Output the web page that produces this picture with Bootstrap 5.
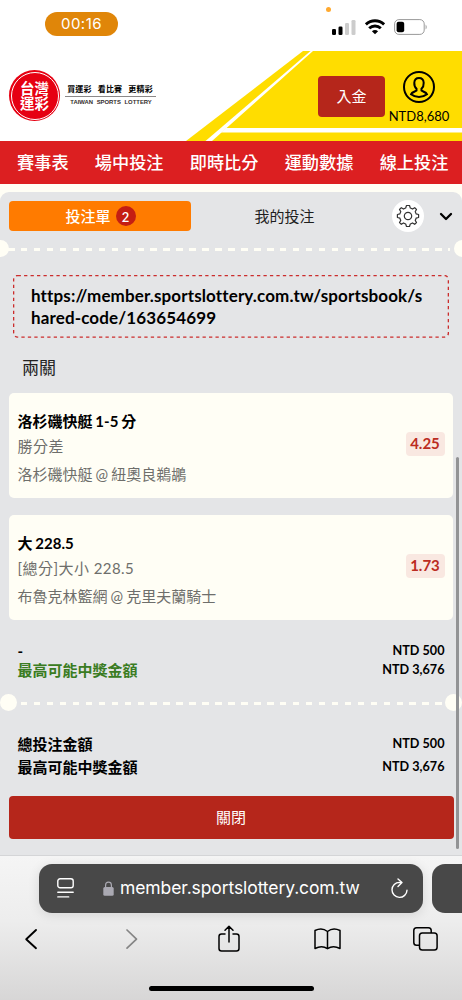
<!DOCTYPE html>
<html lang="zh-Hant">
<head>
<meta charset="utf-8">
<meta name="viewport" content="width=device-width, initial-scale=1">
<title>台灣運彩</title>
<link rel="stylesheet" href="https://cdn.jsdelivr.net/npm/bootstrap@5.3.0/dist/css/bootstrap.min.css">
<style>
  :root { --cream:#fffef5; --brick:#b5261b; --panel:#e4e5e7; }
  body { font-family: Lato, "Noto Sans CJK TC", sans-serif; color:#000; background:#fff; width:462px; height:1000px; overflow:hidden; line-height:1; }
  svg { display:block; flex:none; }
  .status { height:51px; padding:12px 34px 0 45px; }
  .clock { width:73px; height:24px; background:#e08609; color:#fff; font:400 15px/24px Inter, sans-serif; text-align:center; letter-spacing:.5px; }
  .mic { left:325.5px; top:7px; width:5px; height:5px; background:#ffa92f; }
  .signals { padding-top:7px; gap:9px; }
  .site-head { height:90px; }
  .seal { width:51px; height:51px; margin:19px 0 0 9px; background:#e60012; }
  .seal::after { content:""; position:absolute; inset:1.5px; border:1px solid #fff; border-radius:50%; }
  .seal span { font-size:14.5px; line-height:15px; height:15px; font-weight:700; color:#fff; text-align:center; }
  .motto { margin:32px 0 0 5px; width:92px; text-align:center; }
  .motto-zh { font-size:8px; font-weight:700; line-height:12.5px; height:13.5px; border-bottom:1px solid #8b8888; white-space:pre; width:91px; padding-right:1px; letter-spacing:.15px; }
  .motto-en { font:bold 5.9px/8px "Liberation Sans", sans-serif; color:#332d2d; margin-top:1.5px; white-space:nowrap; word-spacing:2px; }
  .deposit { margin:24.5px 0 0 161px; width:67px; height:41.5px; border-radius:4px; background:var(--brick); color:#fff; font-size:15px; padding:0; border:0; flex:none; }
  .account { margin:20px 0 0 2px; width:64px; font-size:13px; gap:7px; flex:none; }
  .mainnav { height:43px; background:#dc1f21; color:#fff; padding:1px 0 0 17px; gap:26.2px; font-size:17.2px; font-weight:500; white-space:nowrap; }
  .stage { background:var(--cream); padding-top:8px; height:671px; }
  .slip { background:var(--panel); border-radius:9px 9px 0 0; height:663px; padding:9px 9px 0; }
  .tabs-row { height:30px; font-size:15px; }
  .tab-on { width:182px; height:30px; background:#ff7b00; color:#fff; border-radius:4px; gap:5px; font-weight:500; margin-left:-.5px; padding-left:2px; }
  .count { width:20px; height:20px; background:#c41e13; font:600 13px/20px Lato, sans-serif; padding-top:1px; }
  .tab-off { width:188px; color:#1e1e1e; }
  .gear { width:32px; height:32px; background:#fff; margin-left:13.5px; }
  .perf { height:17px; margin:9px -9px 0; overflow:hidden; }
  .perf::before, .perf::after { content:""; position:absolute; top:0; width:17px; height:17px; border-radius:50%; background:var(--cream); }
  .perf::before { left:0; } .perf::after { right:0; }
  .perf.edge::before { left:-8.5px; } .perf.edge::after { right:-8.5px; }
  .perf i { display:block; height:2.5px; margin:8px 12px 0 7.5px; background:repeating-linear-gradient(90deg,var(--cream) 0 6.5px,transparent 6.5px 12.95px); }
  .share { margin:18px 4px 0; height:63px; padding:10px 0 0 18px; font-size:17px; font-weight:700; line-height:21.5px; letter-spacing:.13px; white-space:nowrap; font-variant-ligatures:none; }
  .share svg { top:0; left:0; }
  .fold { font-size:17px; line-height:20px; margin:20px 0 0 13px; color:#222; }
  .bet { height:105px; background:var(--cream); border-radius:5px; padding:17px 8.5px 0 8.5px; font-size:15px; white-space:nowrap; }
  .bet .pick { font-weight:700; line-height:22px; word-spacing:-.8px; }
  .bet .kind { line-height:28px; color:#6e6e6b; letter-spacing:.45px; }
  .bet .game { line-height:28px; color:#6e6e6b; word-spacing:-.8px; }
  .odds { width:39px; height:24px; border-radius:4px; background:#f9e8e1; color:#bc2c21; font-size:15px; font-weight:700; margin-top:21.5px; }
  .sum { padding:0 8.5px; font-size:15px; font-weight:700; }
  .sum .amt { font-size:12.65px; }
  .sum > div { height:19px; }
  .sum.loose > div { height:23px; }
  .green { color:#3a7c22; }
  .close-btn { width:445px; margin:17px 0 0 -.5px; height:43px; border-radius:4px; background:var(--brick); border:0; color:#fff; font-size:15px; padding:0; }
  .thumb { width:3.5px; left:455.5px; top:457px; height:392px; background:#929395; border-radius:2px; }
  .chrome { height:145px; background:linear-gradient(#f5f5f5,#ededed 45%,#d7d6d6); border-top:1px solid #d4d5d7; overflow:hidden; }
  .urlrow { padding:8px 0 0 39px; gap:9px; }
  .urlbar { width:384px; height:48.5px; border-radius:13px; background:#484848; color:#fff; flex:none; padding:0 14px 0 18px; box-shadow:0 2px 12px #0000001c; }
  .urlbar span { font:400 17.5px/48px Inter, sans-serif; margin-left:6px; width:270px; white-space:nowrap; letter-spacing:-.1px; }
  .nexttab { width:40px; height:48.5px; border-radius:13px 0 0 13px; background:#484848; flex:none; }
  .tools { height:53px; padding:0 24px; gap:76px; }
  .homebar { width:165px; height:5.5px; background:#000; margin:20px auto 0; }
</style>
<script src="https://cdn.jsdelivr.net/npm/bootstrap@5.3.0/dist/js/bootstrap.bundle.min.js"></script>
</head>
<body>
<header class="status d-flex justify-content-between position-relative">
  <div class="clock rounded-pill">00:16</div>
  <span class="mic position-absolute rounded-circle"></span>
  <div class="signals d-flex align-items-start">
    <svg width="24" height="16"><g fill="#000"><rect x="0" y="10" width="4" height="6" rx="1.3"/><rect x="6.5" y="7.5" width="4" height="8.5" rx="1.3"/></g><g fill="#ccc"><rect x="13" y="4" width="4" height="12" rx="1.3"/><rect x="19.5" y="1" width="4" height="15" rx="1.3"/></g></svg>
    <svg width="20" height="16" viewBox="0 0 20 16" fill="none" stroke="#000" stroke-width="2.9"><path d="M.9 5.4a13.2 13.2 0 0 1 18.2 0"/><path d="M4.2 9.3a8.4 8.4 0 0 1 11.6 0"/><path d="M6.9 12.3Q10 9.7 13.1 12.3L10 15.2Z" fill="#000" stroke="none"/></svg>
    <svg width="34" height="16" viewBox="0 0 34 16"><rect x=".6" y=".6" width="29.6" height="14.8" rx="4.3" fill="none" stroke="#999"/><rect x="2.6" y="2.8" width="7.6" height="10.4" rx="2" /><path d="M31.6 5.4q2.2 2.6 0 5.2z" fill="#999"/></svg>
  </div>
</header>

<section class="site-head d-flex position-relative">
  <svg class="position-absolute top-0 start-0" width="462" height="90">
    <path d="M303 0H462V90H186Z" fill="#fd0"/>
    <path d="M310.5 0H313L212 90H205.5Z" fill="#fff"/>
    <path d="M226 77H462V81.5H221Z" fill="#fff"/>
  </svg>
  <div class="seal rounded-circle position-relative d-flex flex-column justify-content-center flex-shrink-0"><span>台灣</span><span>運彩</span></div>
  <div class="motto"><div class="motto-zh">買運彩&#8195;看比賽&#8195;更精彩</div><div class="motto-en">TAIWAN SPORTS LOTTERY</div></div>
  <button class="deposit btn position-relative">入金</button>
  <div class="account d-flex flex-column align-items-center position-relative">
    <svg width="32" height="32" viewBox="0 0 32 32" fill="none" stroke="#000" stroke-width="2"><circle cx="16" cy="16" r="15"/><path d="M13.5 19.5V17.7C11.7 16 11.2 13.7 11.3 11.7 11.5 8.5 13.2 7 16 7s4.5 1.5 4.7 4.7c.1 2-.4 4.3-2.2 6v1.8c1 1 4.7 1.6 5.5 3.8C21.5 25.3 19 26 16 26s-5.5-.7-8-2.7c.8-2.2 4.5-2.8 5.5-3.8Z"/></svg>
    <span>NTD8,680</span>
  </div>
</section>

<nav class="mainnav d-flex align-items-center"><span>賽事表</span><span>場中投注</span><span>即時比分</span><span>運動數據</span><span>線上投注</span></nav>

<main class="stage">
  <div class="slip">
    <div class="tabs-row d-flex align-items-center">
      <div class="tab-on d-flex align-items-center justify-content-center">投注單<span class="count rounded-circle d-flex align-items-center justify-content-center">2</span></div>
      <div class="tab-off text-center">我的投注</div>
      <div class="gear rounded-circle d-flex align-items-center justify-content-center">
        <svg width="24" height="24" viewBox="-12 -12 24 24" fill="none" stroke="#333" stroke-width="1.2" stroke-linejoin="round"><circle r="3.7"/><path d="M-1.5-10.5H1.5L2.3-8Q3.6-7.5 4.5-6.9L6.7-8.3 8.5-6.6 7.2-4.3Q7.9-3.2 8.1-2.2L10.6-1.5V1.5L8.1 2.2Q7.9 3.2 7.2 4.3L8.5 6.6 6.7 8.3 4.5 6.9Q3.6 7.5 2.3 8L1.5 10.5H-1.5L-2.3 8Q-3.6 7.5-4.5 6.9L-6.7 8.3-8.5 6.6-7.2 4.3Q-7.9 3.2-8.1 2.2L-10.6 1.5V-1.5L-8.1-2.2Q-7.9-3.2-7.2-4.3L-8.5-6.6-6.7-8.3-4.5-6.9Q-3.6-7.5-2.3-8Z"/></svg>
      </div>
      <svg class="ms-auto" width="14" height="9" viewBox="0 0 14 9" fill="none" stroke="#000" stroke-width="2.3" stroke-linecap="round" stroke-linejoin="round"><path d="M2 2l5 5 5-5"/></svg>
    </div>
    <div class="perf edge position-relative"><i></i></div>

    <div class="share position-relative">
      <svg class="position-absolute" width="436" height="63" fill="none" stroke="#cb2d2d" stroke-dasharray="3.3 3.17"><rect x=".6" y=".6" width="434.8" height="61.5" rx="4" stroke-width="1.4"/></svg>
      https://member.sportslottery.com.tw/sportsbook/s<br>hared-code/163654699
    </div>
    <div class="fold">兩關</div>

    <div class="bet d-flex justify-content-between" style="margin-top:15px">
      <div><div class="pick">洛杉磯快艇 1-5 分</div><div class="kind">勝分差</div><div class="game">洛杉磯快艇 @ 紐奧良鵜鶘</div></div>
      <div class="odds d-flex align-items-center justify-content-center">4.25</div>
    </div>
    <div class="bet d-flex justify-content-between" style="margin-top:17px">
      <div><div class="pick">大 228.5</div><div class="kind">[總分]大小 228.5</div><div class="game">布魯克林籃網 @ 克里夫蘭騎士</div></div>
      <div class="odds d-flex align-items-center justify-content-center">1.73</div>
    </div>

    <div class="sum" style="margin-top:22px">
      <div class="d-flex justify-content-between align-items-center"><span>-</span><span class="amt">NTD 500</span></div>
      <div class="d-flex justify-content-between align-items-center"><span class="green">最高可能中獎金額</span><span class="amt">NTD 3,676</span></div>
    </div>
    <div class="perf position-relative" style="margin-top:14px"><i></i></div>
    <div class="sum loose" style="margin-top:22px">
      <div class="d-flex justify-content-between align-items-center"><span>總投注金額</span><span class="amt">NTD 500</span></div>
      <div class="d-flex justify-content-between align-items-center"><span>最高可能中獎金額</span><span class="amt">NTD 3,676</span></div>
    </div>
    <button class="close-btn btn">關閉</button>
  </div>
</main>
<span class="thumb position-absolute"></span>

<footer class="chrome">
  <div class="urlrow d-flex">
    <div class="urlbar d-flex align-items-center">
      <svg width="17" height="20" viewBox="0 0 17 20" fill="none" stroke="#fff" stroke-width="1.4" stroke-linecap="round"><rect x=".8" y=".8" width="15.4" height="9" rx="2.3"/><path d="M.8 14.2H16.2M.8 18.9H11.7"/></svg>
      <svg style="margin-left:29px" width="11" height="15" viewBox="0 0 11 15"><rect x=".3" y="6" width="10.4" height="8.7" rx="1.5" fill="#aaa9b2"/><path d="M2.6 6.5V4a2.9 2.9 0 0 1 5.8 0v2.5" fill="none" stroke="#aaa9b2" stroke-width="1.2"/></svg>
      <span class="flex-shrink-0">member.sportslottery.com.tw</span>
      <svg width="19" height="21" viewBox="0 0 19 21" fill="none" stroke="#fff" stroke-width="1.4" stroke-linecap="round" stroke-linejoin="round"><path d="M9.5 4.4A7.5 7.5 0 1 0 17 12.2M8 1l4 3.6-4 3.8M11.5 4.6H9"/></svg>
    </div>
    <div class="nexttab"></div>
  </div>
  <div class="tools d-flex align-items-center">
    <svg width="14" height="22" viewBox="0 0 14 22" fill="none" stroke="#000" stroke-width="1.9" stroke-linecap="round" stroke-linejoin="round"><path d="M12 2L2.2 11.2 12 20.2"/></svg>
    <svg style="margin-left:11px" width="14" height="22" viewBox="0 0 14 22" fill="none" stroke="#858585" stroke-width="1.7" stroke-linecap="round" stroke-linejoin="round"><path d="M2 2l9.5 9.2L2 20.2"/></svg>
    <svg style="margin-left:3px" width="22" height="28" viewBox="0 0 22 28" fill="none" stroke="#000" stroke-width="1.5" stroke-linecap="round" stroke-linejoin="round"><path d="M7 9H3.5Q1 9 1 11.5V23.5Q1 26 3.5 26H18.5Q21 26 21 23.5V11.5Q21 9 18.5 9H15M11 17V1.5M7 5.3l4-4 4 4"/></svg>
    <svg style="margin-left:-2px" width="27" height="22" viewBox="0 0 27 22" fill="none" stroke="#000" stroke-width="1.5" stroke-linejoin="round"><path d="M13.5 3.5Q8-1 1 2.5V20.5Q8 17 13.5 20.7 19 17 26 20.5V2.5Q19-1 13.5 3.5ZM13.5 3.5V20.7"/></svg>
    <svg style="margin-left:-4px" width="25" height="24" viewBox="0 0 25 24" fill="none" stroke="#000" stroke-width="1.5"><path d="M6.3 18.2H3.6Q.8 18.2.8 15.4V3.6Q.8.8 3.6.8H15.4Q18.2.8 18.2 3.6V6"/><rect x="6.5" y="6" width="17.6" height="17" rx="2.8"/></svg>
  </div>
  <div class="homebar rounded-pill"></div>
</footer>
</body>
</html>
